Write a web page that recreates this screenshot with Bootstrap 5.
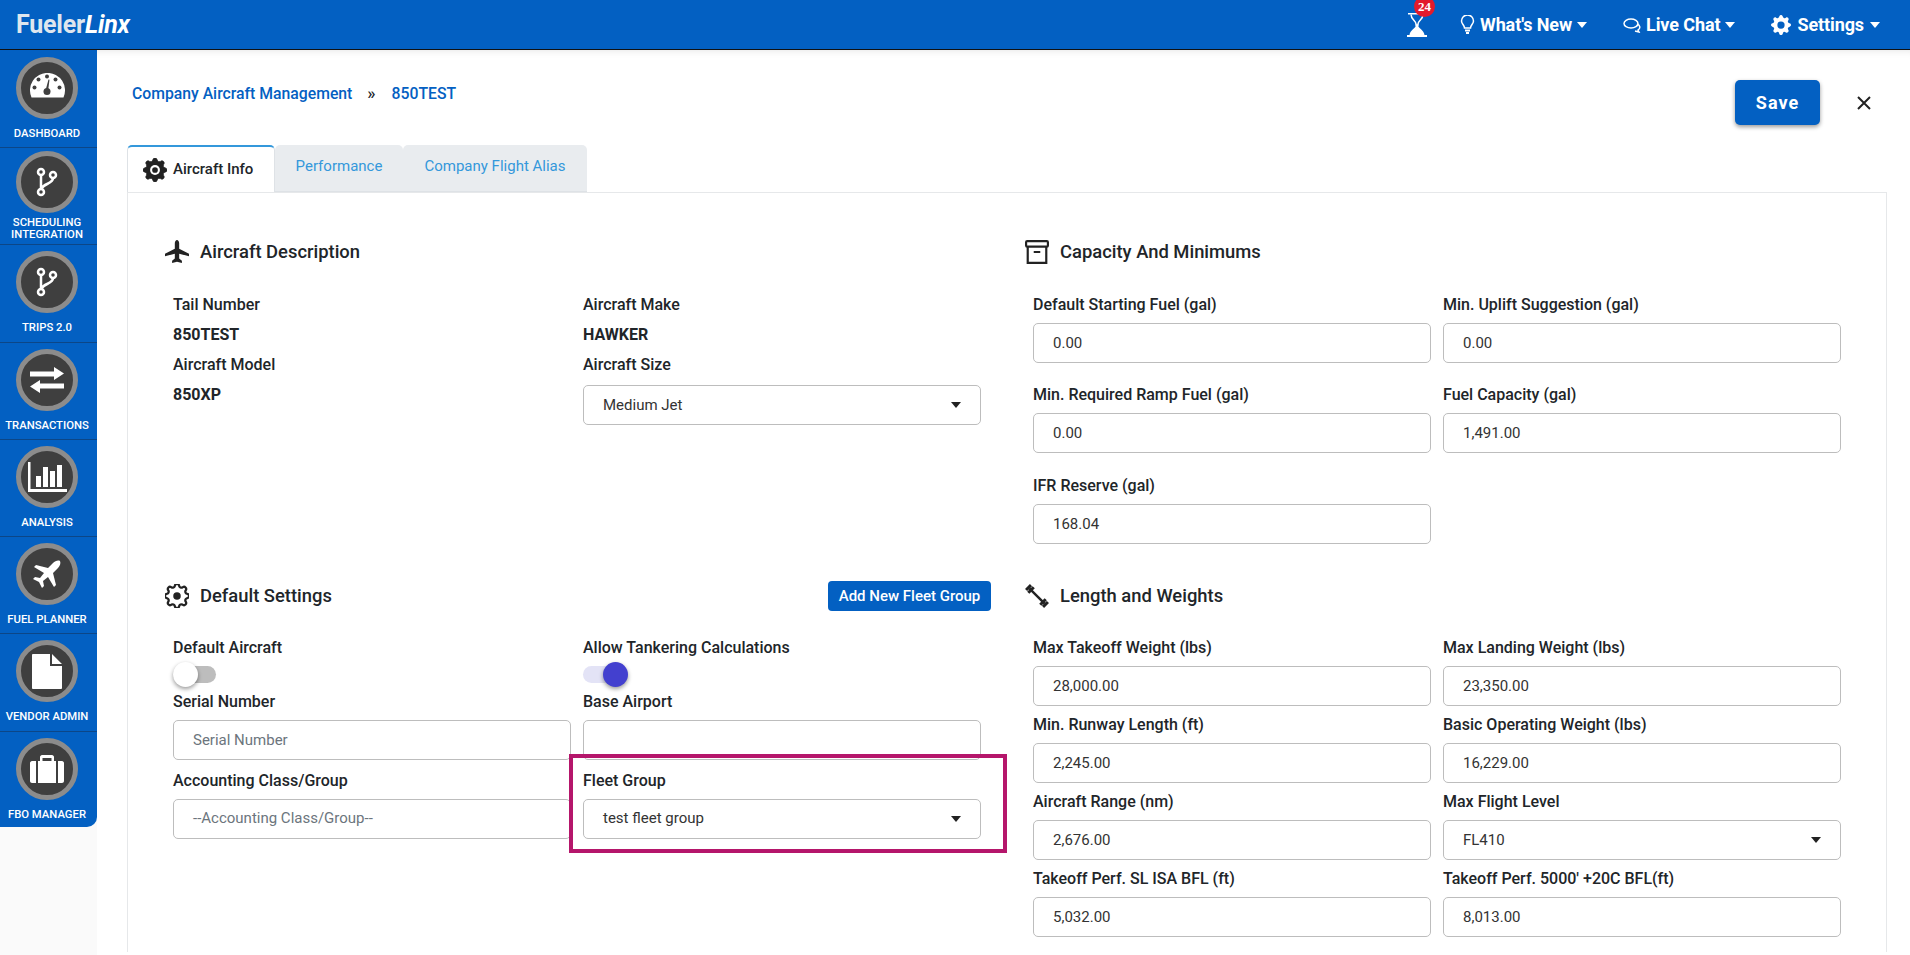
<!DOCTYPE html>
<html lang="en">
<head>
<meta charset="utf-8">
<title>Aircraft</title>
<link href="https://cdn.jsdelivr.net/npm/bootstrap@5.3.0/dist/css/bootstrap.min.css" rel="stylesheet">
<style>
html,body{height:955px;overflow:hidden}
body{font-family:Roboto,"Liberation Sans",sans-serif;font-size:16px;color:#212529;background:#fff}
.top-bar{height:50px;background:#0360c2;border-bottom:1px solid #111;padding:0 30px 0 16px}
.brand-txt{font-size:25px;font-weight:700;color:#dfe6ee;letter-spacing:-.2px}
.brand-txt i{color:#fff}
.top-link{color:#fff;font-size:18px;font-weight:700;display:flex;align-items:center;letter-spacing:-.1px}
.top-link+.top-link{margin-left:36px}
.caret-d{width:0;height:0;border-left:5px solid transparent;border-right:5px solid transparent;border-top:6px solid #fff;margin-left:5px}
.hour-wrap{position:relative;width:20px;height:24px;margin-right:33px}
.hour-wrap svg{display:block}
.red-dot{position:absolute;top:-17px;left:7px;width:21px;height:21px;border-radius:50%;background:#e21a2c;color:#fff;font:700 13px/21px "Liberation Serif",serif;text-align:center}
.shell{height:905px}
.side-col{width:97px;flex:none;background:#fafafa}
.side-menu{background:#0360c2;border-bottom-right-radius:10px}
.side-item{height:97.250px;border-bottom:1px solid #0c4687;padding:6px 3px 0 0;text-align:center;color:#fff;font-size:11.300px;font-weight:500;line-height:12px}
.side-item:last-child{border-bottom:0;height:95.500px}
.side-item.two{padding-top:3px}
.side-item.first{padding-top:7px;height:98px}
.ring{width:62px;height:62px;border-radius:50%;background:#3f3f3f;border:5px solid #8c8c8c;margin:0 auto 9px;display:flex;align-items:center;justify-content:center}
.side-item.two .ring{margin-bottom:4px}
.page-main{flex:1;min-width:0;box-shadow:inset 0 8px 8px -8px rgba(0,0,0,.12);padding:30px 23px 0 30px;position:relative}
.crumbs{font-size:15.750px;font-weight:500;color:#0360c2;height:24px;line-height:26px;padding-left:5px}
.crumbs span{color:#212529;margin:0 16px 0 15px;font-size:17px}
.save-btn{background:#0360c2;color:#fff;font-size:18px;font-weight:700;letter-spacing:1px;width:85px;height:45px;border-radius:5px;box-shadow:0 2px 4px rgba(0,0,0,.4);border:0}
.tab-one{width:148px;height:47px;background:#fff;border:1px solid #dee2e6;border-top:2px solid #3498db;border-bottom:0;border-radius:5px 5px 0 0;font-weight:500;font-size:15px;position:relative;z-index:1;margin-bottom:-1px;padding-left:15px;gap:6px}
.tab-other{height:47px;background:#e9ecef;color:#3498db;font-size:15px;padding-bottom:4px;border-bottom:1px solid #dee2e6;justify-content:center;border-radius:5px 5px 0 0}
.pane-box{border:1px solid #e6e8ea;border-bottom:0;height:760px;padding:39px 19px 0 19px}
.sect-head{height:40px;font-size:18.400px;font-weight:500;margin-bottom:23px;color:#212529}
.sect-head.lower{margin-bottom:22px}
.sect-head svg{flex:none;margin:0 11px 0 -2px}
.fld-row{margin:0}
.fld-row>div{padding:0 6px}
.fld-label{font-weight:500;line-height:20px;margin:0 0 8px;display:block}
.fld-in{height:40px;border:1px solid #bdbdbd;border-radius:5px;padding:0 19px;font-size:15px;color:#333;width:100%;display:flex;align-items:center;background:#fff;justify-content:space-between}
.fld-in.empty{color:#6c757d}
.fld-in .tri{width:0;height:0;border-left:5px solid transparent;border-right:5px solid transparent;border-top:6px solid #222}
.pitch-a{height:90.490px}
.pitch-b{height:77px}
.pitch-s{height:78.500px}
.flat-val{font-weight:700;line-height:20px;margin-bottom:10px}
.flat-lab{font-weight:500;line-height:20px;margin-bottom:10px}
.add-btn{background:#0360c2;color:#fff;font-weight:500;font-size:15px;height:30px;width:163px;border-radius:4px;border:0;padding:0}
.tog{position:relative;width:43px;height:17px;border-radius:9px;margin:8px 0 0;display:block}
.tog b{position:absolute;width:25px;height:25px;top:-4px;border-radius:50%}
.tog.off{background:#bdbdbd}
.tog.off b{left:0;background:#fff;box-shadow:0 2px 4px rgba(0,0,0,.4)}
.tog.on{background:#e3e3f6}
.tog.on b{left:20px;background:#4340cf;box-shadow:0 2px 4px rgba(0,0,0,.4)}
.mark-box{position:absolute;left:472px;top:704px;width:438px;height:99px;border:4px solid #b5166b;pointer-events:none}
</style>
</head>
<body>
<svg width="0" height="0" style="position:absolute"><defs>
<path id="gear-s" d="M9.400 1.100c-.4-1.500-2.400-1.500-2.800 0l-.1.300a1.500 1.500 0 0 1-2.100.9l-.3-.2c-1.300-.8-2.800.7-2 2l.2.300a1.500 1.500 0 0 1-.9 2.100l-.3.100c-1.500.4-1.500 2.400 0 2.800l.3.100a1.500 1.500 0 0 1 .9 2.100l-.2.300c-.8 1.300.7 2.800 2 2l.3-.2a1.500 1.500 0 0 1 2.100.9l.1.300c.4 1.500 2.400 1.500 2.800 0l.1-.3a1.500 1.500 0 0 1 2.100-.9l.3.200c1.300.8 2.800-.7 2-2l-.2-.3a1.500 1.500 0 0 1 .9-2.100l.3-.1c1.500-.4 1.500-2.400 0-2.800l-.3-.1a1.500 1.500 0 0 1-.9-2.100l.2-.3c.8-1.300-.7-2.800-2-2l-.3.200a1.500 1.500 0 0 1-2.100-.9z"/>
<g id="branch" fill="none" stroke="#fff" stroke-width="2.500"><circle cx="5" cy="5" r="3"/><circle cx="5" cy="25" r="3"/><circle cx="17" cy="8" r="3"/><path d="M5 8v14M17 11c0 6-9 5-12 11"/></g>
</defs></svg>
<nav class="top-bar d-flex align-items-center justify-content-between">
  <div class="brand-txt">Fueler<i>Linx</i></div>
  <div class="d-flex align-items-center">
    <div class="hour-wrap"><svg width="20" height="24" viewBox="0 0 20 24"><path d="M1 0h18v1.500H1z" fill="#fff"/><path d="M4 1.500c0 5 5 6 5 9.500v1h2v-1c0-3.500 5-4.500 5-9.500" fill="none" stroke="#fff" stroke-width="1.500"/><path d="M9 12c0 3-6 5-6.500 10h15C17 17 11 15 11 12z" fill="#fff"/><path d="M0 22h20v2H0z" fill="#fff"/></svg><span class="red-dot">24</span></div>
    <div class="top-link"><svg width="15" height="20" viewBox="0 0 15 20" fill="none" stroke="#fff" stroke-width="1.500" style="margin-right:5px"><path d="M4.500 13c0-3-3-4-3-7a6 6 0 0 1 12 0c0 3-3 4-3 7z"/><path d="M5 15.500h5M6 18h3" stroke-width="2"/></svg>What's New<span class="caret-d"></span></div>
    <div class="top-link"><svg width="19" height="16" viewBox="0 0 19 16" fill="none" stroke="#fff" stroke-width="1.500" style="margin-right:4px"><ellipse cx="8" cy="6.500" rx="7" ry="4.500"/><path d="M14 7c3 1 4 4 1 6l1 2-4-1"/></svg>Live Chat<span class="caret-d"></span></div>
    <div class="top-link"><svg width="20" height="20" viewBox="0 0 16 16" fill="#fff" style="margin-right:6px"><path fill-rule="evenodd" d="M9.400 1.100c-.4-1.500-2.400-1.500-2.800 0l-.1.300a1.500 1.500 0 0 1-2.100.9l-.3-.2c-1.300-.8-2.800.7-2 2l.2.300a1.500 1.500 0 0 1-.9 2.100l-.3.100c-1.500.4-1.500 2.400 0 2.800l.3.100a1.500 1.500 0 0 1 .9 2.100l-.2.300c-.8 1.300.7 2.800 2 2l.3-.2a1.500 1.500 0 0 1 2.100.9l.1.300c.4 1.500 2.400 1.500 2.800 0l.1-.3a1.500 1.500 0 0 1 2.100-.9l.3.200c1.300.8 2.800-.7 2-2l-.2-.3a1.500 1.500 0 0 1 .9-2.100l.3-.1c1.500-.4 1.500-2.400 0-2.800l-.3-.1a1.500 1.500 0 0 1-.9-2.100l.2-.3c.8-1.300-.7-2.800-2-2l-.3.200a1.500 1.500 0 0 1-2.100-.9zM8 10.900A2.900 2.900 0 1 1 8 5.100a2.900 2.900 0 0 1 0 5.800z"/></svg>Settings<span class="caret-d" style="margin-left:6px"></span></div>
  </div>
</nav>
<div class="shell d-flex">
  <aside class="side-col">
    <div class="side-menu">
      <div class="side-item first"><div class="ring"><svg width="35" height="25" viewBox="0 0 35 25" style="margin-top:-6px"><path d="M1.500 24.500A17.500 17.500 0 1 1 33.500 24.500z" fill="#fff"/><g fill="#3f3f3f"><circle cx="17" cy="3.500" r="2"/><circle cx="8.500" cy="6.500" r="2"/><circle cx="25.500" cy="6.500" r="2"/><circle cx="4.500" cy="14.500" r="2"/><circle cx="29.500" cy="14.500" r="2"/><circle cx="17" cy="18.500" r="3.500"/><path d="M15.500 17.500l3-11 1 .3-1.500 11.200z"/></g></svg></div>DASHBOARD</div>
      <div class="side-item two"><div class="ring"><svg width="22" height="30" viewBox="0 0 22 30"><use href="#branch"/></svg></div>SCHEDULING<br>INTEGRATION</div>
      <div class="side-item"><div class="ring"><svg width="22" height="30" viewBox="0 0 22 30"><use href="#branch"/></svg></div>TRIPS 2.0</div>
      <div class="side-item"><div class="ring"><svg width="34" height="26" viewBox="0 0 34 26" fill="#fff"><path d="M0 4.500h24V0l10 6.500L24 13V9.500H0zM34 16.500H10V13L0 19.500 10 26v-4.500h24z"/></svg></div>TRANSACTIONS</div>
      <div class="side-item"><div class="ring"><svg width="40" height="32" viewBox="0 0 40 32" fill="#fff"><path d="M1 1h2.500v27H40v3H1z"/><rect x="9" y="15" width="5" height="11"/><rect x="16" y="6" width="5" height="20"/><rect x="23" y="10" width="5" height="16"/><rect x="30" y="4" width="5" height="22"/></svg></div>ANALYSIS</div>
      <div class="side-item"><div class="ring"><svg width="28" height="28" viewBox="0 0 28 28" fill="#fff"><path d="M27 1c-2-1-5 0-7 2l-5 5L3 5 1 7l10 6-4 5-5-1-2 2 6 3 3 6 2-2-1-5 5-4 6 10 2-2-3-12 5-5c2-2 3-5 2-7z"/></svg></div>FUEL PLANNER</div>
      <div class="side-item"><div class="ring"><svg width="30" height="35" viewBox="0 0 30 35" fill="#fff"><path d="M0 1c0-.5.5-1 1-1h17v12h12v22c0 .5-.5 1-1 1H1c-.5 0-1-.5-1-1zM20 0l10 10H20z"/></svg></div>VENDOR ADMIN</div>
      <div class="side-item"><div class="ring"><svg width="34" height="30" viewBox="0 0 34 30" fill="#fff"><path d="M10 7V3c0-1 1-2 2-2h10c1 0 2 1 2 2v4h-2.500V4h-9v3z"/><path d="M2 7h4v22H2c-1 0-2-1-2-2V9c0-1 1-2 2-2zM8 7h18v22H8zM28 7h4c1 0 2 1 2 2v18c0 1-1 2-2 2h-4z"/></svg></div>FBO MANAGER</div>
    </div>
  </aside>
  <main class="page-main">
    <div class="d-flex justify-content-between">
      <div class="crumbs">Company Aircraft Management<span>»</span>850TEST</div>
      <div class="d-flex align-items-center">
        <button class="save-btn">Save</button>
        <svg style="margin:0 15px 0 36px" width="16" height="16" viewBox="0 0 16 16" stroke="#222" stroke-width="2"><path d="M2 2l12 12M14 2L2 14"/></svg>
      </div>
    </div>
    <div class="d-flex" style="margin-top:20px">
      <div class="tab-one d-flex align-items-center"><svg width="24" height="24" viewBox="0 0 16 16"><use href="#gear-s" fill="#222" stroke="#222" stroke-width=".5"/><circle cx="8" cy="8" r="3.300" fill="#fff"/><circle cx="8" cy="8" r="1.900" fill="#222"/></svg>Aircraft Info</div>
      <div class="tab-other d-flex align-items-center" style="width:128px">Performance</div>
      <div class="tab-other d-flex align-items-center" style="width:184px">Company Flight Alias</div>
    </div>
    <div class="pane-box">
      <div class="row m-0" style="--bs-gutter-x:40px;height:344px">
        <div class="col-6">
          <div class="sect-head d-flex align-items-center"><svg width="24" height="24" viewBox="0 0 22 22" fill="#222"><path d="M11 0c1 0 2 1.500 2 3v5l9 4.500V15l-9-2.500v4.500l2.500 2V21L11 20l-4.500 1v-2l2.500-2v-4.500L0 15v-2.500L9 8V3c0-1.500 1-3 2-3z"/></svg>Aircraft Description</div>
          <div class="row fld-row">
            <div class="col-6"><div class="flat-lab">Tail Number</div><div class="flat-val">850TEST</div><div class="flat-lab">Aircraft Model</div><div class="flat-val">850XP</div></div>
            <div class="col-6"><div class="flat-lab">Aircraft Make</div><div class="flat-val">HAWKER</div><div class="flat-lab">Aircraft Size</div><div class="fld-in">Medium Jet<span class="tri"></span></div></div>
          </div>
        </div>
        <div class="col-6">
          <div class="sect-head d-flex align-items-center"><svg width="24" height="24" viewBox="0 0 22 22" fill="none" stroke="#222" stroke-width="2"><rect x="1" y="1" width="20" height="5" rx="1"/><path d="M2.500 6v15h17V6M8 11h6"/></svg>Capacity And Minimums</div>
          <div class="row fld-row">
            <div class="col-6 pitch-a"><label class="fld-label">Default Starting Fuel (gal)</label><div class="fld-in">0.00</div></div>
            <div class="col-6 pitch-a"><label class="fld-label">Min. Uplift Suggestion (gal)</label><div class="fld-in">0.00</div></div>
            <div class="col-6 pitch-a"><label class="fld-label">Min. Required Ramp Fuel (gal)</label><div class="fld-in">0.00</div></div>
            <div class="col-6 pitch-a"><label class="fld-label">Fuel Capacity (gal)</label><div class="fld-in">1,491.00</div></div>
            <div class="col-6 pitch-a"><label class="fld-label">IFR Reserve (gal)</label><div class="fld-in">168.04</div></div>
          </div>
        </div>
      </div>
      <div class="row m-0" style="--bs-gutter-x:40px">
        <div class="col-6">
          <div class="sect-head lower d-flex align-items-center justify-content-between"><span class="d-flex align-items-center"><svg width="24" height="24" viewBox="0 0 16 16"><use href="#gear-s" fill="none" stroke="#222" stroke-width="1.500"/><circle cx="8" cy="8" r="2.500" fill="#222"/></svg>Default Settings</span><button class="add-btn" style="margin-right:-4px">Add New Fleet Group</button></div>
          <div class="row fld-row">
            <div class="col-6"><div class="flat-lab" style="margin-bottom:0">Default Aircraft</div><span class="tog off"><b></b></span></div>
            <div class="col-6"><div class="flat-lab" style="margin-bottom:0">Allow Tankering Calculations</div><span class="tog on"><b></b></span></div>
            <div class="col-6 pitch-s" style="margin-top:9px"><label class="fld-label">Serial Number</label><div class="fld-in empty">Serial Number</div></div>
            <div class="col-6 pitch-s" style="margin-top:9px"><label class="fld-label">Base Airport</label><div class="fld-in"></div></div>
            <div class="col-6 pitch-s"><label class="fld-label">Accounting Class/Group</label><div class="fld-in empty">--Accounting Class/Group--</div></div>
            <div class="col-6 pitch-s"><label class="fld-label">Fleet Group</label><div class="fld-in">test fleet group<span class="tri"></span></div></div>
          </div>
        </div>
        <div class="col-6">
          <div class="sect-head lower d-flex align-items-center"><svg width="24" height="24" viewBox="0 0 22 22" fill="none" stroke="#222"><path d="M4 4l14 14" stroke-width="2.200"/><path d="M1 5.500L5.500 1M3 8L8 3M14 19l5-5M16.500 21L21 16.500" stroke-width="2.800"/></svg>Length and Weights</div>
          <div class="row fld-row">
            <div class="col-6 pitch-b"><label class="fld-label">Max Takeoff Weight (lbs)</label><div class="fld-in">28,000.00</div></div>
            <div class="col-6 pitch-b"><label class="fld-label">Max Landing Weight (lbs)</label><div class="fld-in">23,350.00</div></div>
            <div class="col-6 pitch-b"><label class="fld-label">Min. Runway Length (ft)</label><div class="fld-in">2,245.00</div></div>
            <div class="col-6 pitch-b"><label class="fld-label">Basic Operating Weight (lbs)</label><div class="fld-in">16,229.00</div></div>
            <div class="col-6 pitch-b"><label class="fld-label">Aircraft Range (nm)</label><div class="fld-in">2,676.00</div></div>
            <div class="col-6 pitch-b"><label class="fld-label">Max Flight Level</label><div class="fld-in">FL410<span class="tri"></span></div></div>
            <div class="col-6 pitch-b"><label class="fld-label">Takeoff Perf. SL ISA BFL (ft)</label><div class="fld-in">5,032.00</div></div>
            <div class="col-6 pitch-b"><label class="fld-label">Takeoff Perf. 5000' +20C BFL(ft)</label><div class="fld-in">8,013.00</div></div>
          </div>
        </div>
      </div>
    </div>
    <div class="mark-box"></div>
  </main>
</div>
<script src="https://cdn.jsdelivr.net/npm/bootstrap@5.3.0/dist/js/bootstrap.bundle.min.js"></script>
</body>
</html>
